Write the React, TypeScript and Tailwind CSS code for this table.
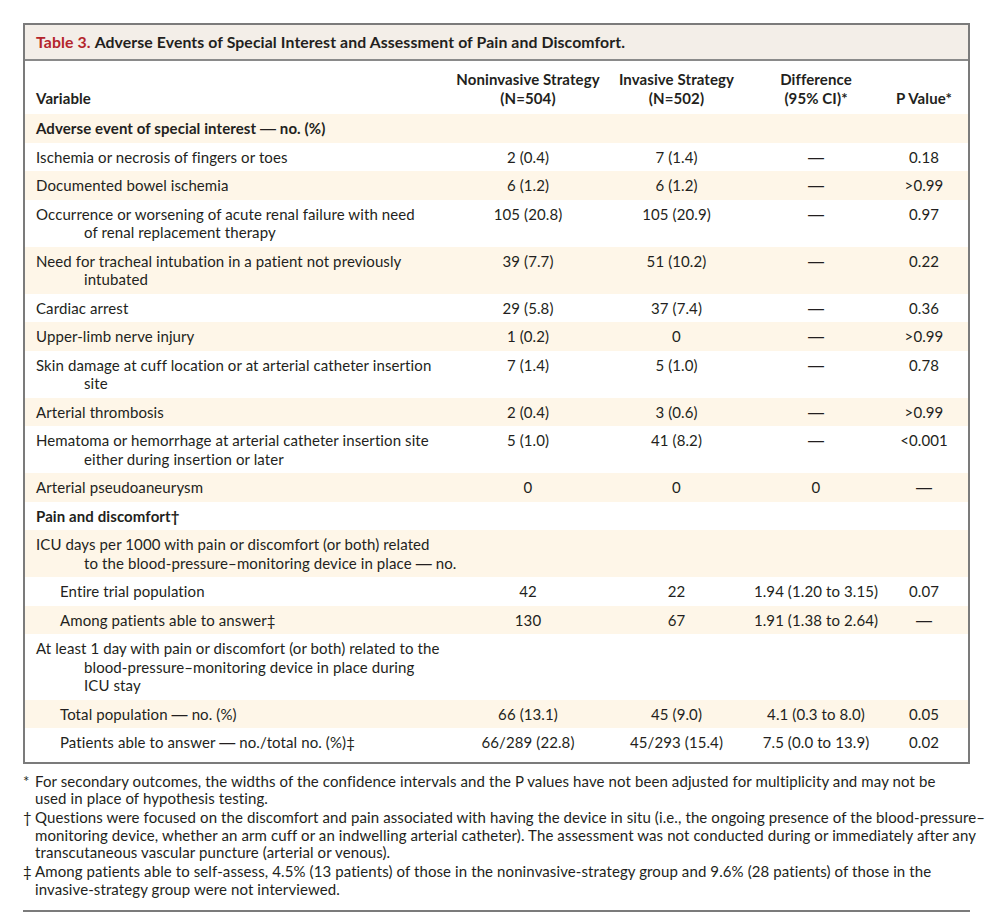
import React from "react"

type Row = {
    label: string[]
    indent?: boolean
    bold?: boolean
    values?: [string, string, string, string]
}

const DASH = "\u2014"

const rows: Row[] = [
    { label: ["Adverse event of special interest \u2014 no. (%)"], bold: true },
    { label: ["Ischemia or necrosis of fingers or toes"], values: ["2 (0.4)", "7 (1.4)", DASH, "0.18"] },
    { label: ["Documented bowel ischemia"], values: ["6 (1.2)", "6 (1.2)", DASH, ">0.99"] },
    { label: ["Occurrence or worsening of acute renal failure with need", "of renal replacement therapy"], values: ["105 (20.8)", "105 (20.9)", DASH, "0.97"] },
    { label: ["Need for tracheal intubation in a patient not previously", "intubated"], values: ["39 (7.7)", "51 (10.2)", DASH, "0.22"] },
    { label: ["Cardiac arrest"], values: ["29 (5.8)", "37 (7.4)", DASH, "0.36"] },
    { label: ["Upper-limb nerve injury"], values: ["1 (0.2)", "0", DASH, ">0.99"] },
    { label: ["Skin damage at cuff location or at arterial catheter insertion", "site"], values: ["7 (1.4)", "5 (1.0)", DASH, "0.78"] },
    { label: ["Arterial thrombosis"], values: ["2 (0.4)", "3 (0.6)", DASH, ">0.99"] },
    { label: ["Hematoma or hemorrhage at arterial catheter insertion site", "either during insertion or later"], values: ["5 (1.0)", "41 (8.2)", DASH, "<0.001"] },
    { label: ["Arterial pseudoaneurysm"], values: ["0", "0", "0", DASH] },
    { label: ["Pain and discomfort\u2020"], bold: true },
    { label: ["ICU days per 1000 with pain or discomfort (or both) related", "to the blood-pressure\u2013monitoring device in place \u2014 no."] },
    { label: ["Entire trial population"], indent: true, values: ["42", "22", "1.94 (1.20 to 3.15)", "0.07"] },
    { label: ["Among patients able to answer\u2021"], indent: true, values: ["130", "67", "1.91 (1.38 to 2.64)", DASH] },
    { label: ["At least 1 day with pain or discomfort (or both) related to the", "blood-pressure\u2013monitoring device in place during", "ICU stay"] },
    { label: ["Total population \u2014 no. (%)"], indent: true, values: ["66 (13.1)", "45 (9.0)", "4.1 (0.3 to 8.0)", "0.05"] },
    { label: ["Patients able to answer \u2014 no./total no. (%)\u2021"], indent: true, values: ["66/289 (22.8)", "45/293 (15.4)", "7.5 (0.0 to 13.9)", "0.02"] },
]

// footnote lines broken as in the printed table
const notes = [
    { sym: "*", lines: ["For secondary outcomes, the widths of the confidence intervals and the P values have not been adjusted for multiplicity and may not be", "used in place of hypothesis testing."] },
    { sym: "\u2020", lines: ["Questions were focused on the discomfort and pain associated with having the device in situ (i.e., the ongoing presence of the blood-pressure\u2013", "monitoring device, whether an arm cuff or an indwelling arterial catheter). The assessment was not conducted during or immediately after any", "transcutaneous vascular puncture (arterial or venous)."] },
    { sym: "\u2021", lines: ["Among patients able to self-assess, 4.5% (13 patients) of those in the noninvasive-strategy group and 9.6% (28 patients) of those in the", "invasive-strategy group were not interviewed."] },
]

// Lato's em dash is short; the print uses a long thin one
const Text = ({ s }: { s: string }) => {
    const parts = s.split(DASH)
    return <>
        {parts.map((p, i) => (
            <React.Fragment key={i}>
                {i > 0 && <span className="font-['Liberation_Sans'] font-normal leading-[0] text-[16px]">{DASH}</span>}
                {p}
            </React.Fragment>
        ))}
    </>
}

const cols = "grid grid-cols-[429px_148px_149px_130px_86px]"

export default function App() {
    return <div className="bg-white min-h-[922px] pt-[23px] pl-[23px] text-[#231f20] text-[15px] tracking-[0.1px]" style={{ fontFamily: "Lato, 'Open Sans', sans-serif" }}>
        <div className="w-[947px] border-2 border-[#7b7b7b]">
            {/* Title */}
            <div className="bg-[#f3eee8] border-b-2 border-[#8a8a8a] h-[36px] flex items-center pl-[11px] font-bold text-[15.8px]">
                <span className="text-[#b4252c]">Table 3.</span>
                <span className="ml-[4px]">Adverse Events of Special Interest and Assessment of Pain and Discomfort.</span>
            </div>

            {/* Header */}
            <div className={`${cols} font-bold leading-[18.5px] pt-[9px] pb-[7px]`}>
                <div className="pl-[11px] self-end">Variable</div>
                <div className="text-center">Noninvasive Strategy<br />(N=504)</div>
                <div className="text-center">Invasive Strategy<br />(N=502)</div>
                <div className="text-center">Difference<br />(95% CI)*</div>
                <div className="text-center self-end">P Value*</div>
            </div>

            {/* Body */}
            {rows.map((r, i) => (
                <div key={i} className={`${cols} leading-[18.5px] py-[5px] ${i % 2 === 0 ? "bg-[#fef6e8]" : "bg-white"} ${i === rows.length - 1 ? "pb-[10px]" : ""}`}>
                    <div className={`${r.indent ? "pl-[35px]" : "pl-[11px]"} ${r.bold ? "font-bold" : ""} whitespace-nowrap`}>
                        {r.label.map((l, j) => (
                            <div key={j} className={`h-[18.5px] ${j > 0 ? "pl-[48px]" : ""}`}><Text s={l} /></div>
                        ))}
                    </div>
                    {r.values ? r.values.map((v, j) => (
                        <div key={j} className="text-center h-[18.5px]"><Text s={v} /></div>
                    )) : <>
                        <div /><div /><div /><div />
                    </>}
                </div>
            ))}
        </div>

        {/* Footnotes */}
        <div className="w-[947px] mt-[9px] leading-[17.5px] border-b-2 border-[#7b7b7b] pb-[12px]">
            {notes.map((n, i) => (
                <div key={i} className={`flex ${i > 0 ? "mt-[1.5px]" : ""}`}>
                    <span className="w-[12px] shrink-0">{n.sym}</span>
                    <div className="whitespace-nowrap">
                        {n.lines.map((l, j) => <div key={j}>{l}</div>)}
                    </div>
                </div>
            ))}
        </div>
    </div>
}
